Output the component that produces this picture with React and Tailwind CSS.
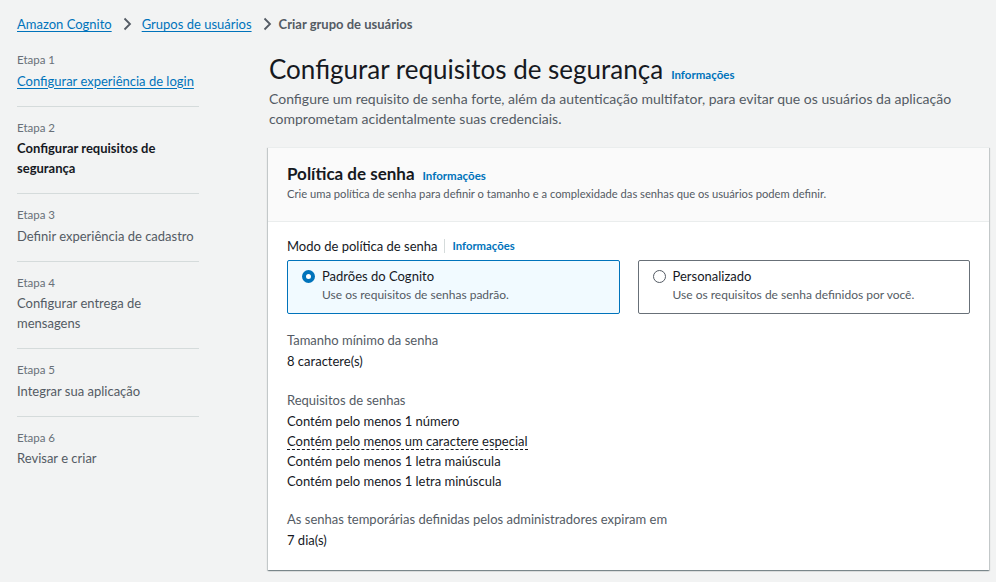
const steps = [
  { n: 1, title: "Configurar experiência de login", state: "link" },
  { n: 2, title: "Configurar requisitos de segurança", state: "active" },
  { n: 3, title: "Definir experiência de cadastro" },
  { n: 4, title: "Configurar entrega de mensagens" },
  { n: 5, title: "Integrar sua aplicação" },
  { n: 6, title: "Revisar e criar" },
];

function Chevron({ className = "" }) {
  return (
    <svg width="10" height="14" viewBox="0 0 10 14" className={`text-[#545b64] ${className}`}>
      <path d="M2.5 1.5 L8 7 L2.5 12.5" fill="none" stroke="currentColor" strokeWidth="1.8" />
    </svg>
  );
}

function Info({ className = "" }) {
  return <span className={`font-bold text-[#0073bb] ${className}`}>Informações</span>;
}

function RadioTile({ checked, title, desc }) {
  return (
    <div
      className={`flex items-start gap-[7px] rounded-[2px] border px-[14px] pt-[5px] pb-[9px] ${
        checked ? "border-[#0073bb] bg-[#f1faff]" : "border-[#687078] bg-white"
      }`}
    >
      <span className="mt-[4px] flex h-[13px] w-[13px] shrink-0 items-center justify-center">
        {checked ? (
          <span className="h-[13px] w-[13px] rounded-full border-[4px] border-[#0073bb] bg-white" />
        ) : (
          <span className="h-[13px] w-[13px] rounded-full border border-[#545b64] bg-white" />
        )}
      </span>
      <div>
        <div className="text-[13px] leading-[20px] text-[#16191f]">{title}</div>
        <div className="text-[12px] leading-[18px] text-[#545b64]">{desc}</div>
      </div>
    </div>
  );
}

export default function App() {
  return (
    <div
      className="min-h-screen w-full bg-[#f2f3f3] text-[#16191f]"
      style={{ fontFamily: "Lato, 'Open Sans', sans-serif" }}
    >
      {/* breadcrumb */}
      <div className="flex items-center px-[17px] pt-[14px] text-[13px] leading-[20px]">
        <span className="text-[#0073bb] underline underline-offset-2">Amazon Cognito</span>
        <Chevron className="mx-[10px]" />
        <span className="text-[#0073bb] underline underline-offset-2">Grupos de usuários</span>
        <Chevron className="ml-[10px] mr-[7px]" />
        <span className="font-bold text-[#545b64]">Criar grupo de usuários</span>
      </div>

      <div className="flex">
        {/* steps */}
        <nav className="ml-[17px] w-[182px] shrink-0 pt-[17px]">
          {steps.map((s, i) => (
            <div
              key={s.n}
              className={`pb-[15px] ${i > 0 ? "border-t border-[#d5dbdb] pt-[12px]" : ""}`}
            >
              <div className="text-[11.5px] leading-[18px] text-[#687078]">Etapa {s.n}</div>
              <div
                className={`mt-[1.5px] text-[13px] leading-[20px] ${
                  s.state === "link"
                    ? "text-[#0073bb] underline underline-offset-2"
                    : s.state === "active"
                    ? "font-bold text-[#16191f]"
                    : "text-[#545b64]"
                }`}
              >
                {s.title}
              </div>
            </div>
          ))}
        </nav>

        {/* main */}
        <main className="ml-[69px] w-[721px] pt-[18px]">
          <div className="flex items-baseline gap-[8px] pl-px">
            <h1 className="text-[26px] leading-[34px] font-normal text-[#16191f]">
              Configurar requisitos de segurança
            </h1>
            <Info className="text-[11.5px]" />
          </div>
          <p className="mt-[3px] pl-px text-[14px] leading-[20px] text-[#545b64]">
            Configure um requisito de senha forte, além da autenticação multifator, para evitar que os usuários da aplicação
            comprometam acidentalmente suas credenciais.
          </p>

          <section className="mt-[18px] border-t border-[#eaeded] bg-white shadow-[0_1px_1px_0_rgba(0,28,36,0.3),1px_1px_1px_0_rgba(0,28,36,0.15),-1px_1px_1px_0_rgba(0,28,36,0.15)]">
            <header className="border-b border-[#eaeded] bg-[#fafafa] px-[19px] pt-[15px] pb-[18px]">
              <div className="flex items-baseline gap-[8px]">
                <h2 className="text-[17px] leading-[22px] font-bold text-[#16191f]">Política de senha</h2>
                <Info className="text-[11.5px]" />
              </div>
              <p className="text-[11.2px] leading-[18px] text-[#545b64]">
                Crie uma política de senha para definir o tamanho e a complexidade das senhas que os usuários podem definir.
              </p>
            </header>

            <div className="px-[19px] pt-[14px] pb-[20px]">
              <div className="flex items-center text-[13px] leading-[20px]">
                <span>Modo de política de senha</span>
                <span className="mx-[7px] h-[14px] w-px bg-[#d5dbdb]" />
                <Info className="text-[11.3px]" />
              </div>
              <div className="mt-[4px] grid grid-cols-2 gap-[18px]">
                <RadioTile checked title="Padrões do Cognito" desc="Use os requisitos de senhas padrão." />
                <RadioTile title="Personalizado" desc="Use os requisitos de senha definidos por você." />
              </div>

              <div className="mt-[16px] text-[13px] leading-[20px]">
                <div className="text-[#545b64]">Tamanho mínimo da senha</div>
                <div className="mt-[1px]">8 caractere(s)</div>
              </div>

              <div className="mt-[19px] text-[13px] leading-[20px]">
                <div className="text-[#545b64]">Requisitos de senhas</div>
                <div className="mt-[1px]">Contém pelo menos 1 número</div>
                <div>
                  <span className="border-b border-dashed border-[#16191f]">Contém pelo menos um caractere especial</span>
                </div>
                <div>Contém pelo menos 1 letra maiúscula</div>
                <div>Contém pelo menos 1 letra minúscula</div>
              </div>

              <div className="mt-[18px] text-[13px] leading-[20px]">
                <div className="text-[#545b64]">As senhas temporárias definidas pelos administradores expiram em</div>
                <div className="mt-[1px]">7 dia(s)</div>
              </div>
            </div>
          </section>
        </main>
      </div>
    </div>
  );
}
